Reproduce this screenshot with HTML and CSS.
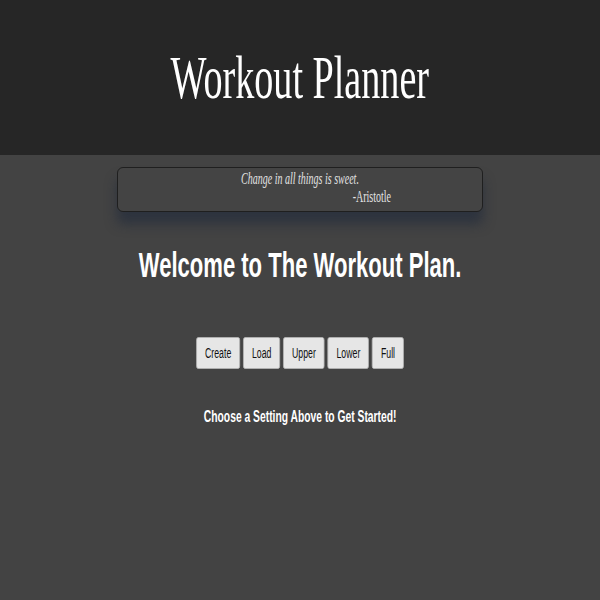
FILE: index.html
```html
<!DOCTYPE html>
<html lang="en">
<head>
<meta charset="utf-8">
<title>Workout Planner</title>
<link rel="stylesheet" href="styles.css">
</head>
<body>
  <header class="header">
    <h1 class="title">Workout Planner</h1>
  </header>
  <main class="main">
    <div class="quote">
      <p class="quote-text">Change in all things is sweet.</p>
      <p class="quote-author">-Aristotle</p>
    </div>
    <h2 class="welcome">Welcome to The Workout Plan.</h2>
    <div class="buttons">
      <button class="btn">Create</button>
      <button class="btn">Load</button>
      <button class="btn">Upper</button>
      <button class="btn">Lower</button>
      <button class="btn">Full</button>
    </div>
    <p class="hint">Choose a Setting Above to Get Started!</p>
  </main>
</body>
</html>
```

FILE: styles.css
```css
html, body {
  margin: 0;
  padding: 0;
  background: #434343;
  min-height: 100%;
}

.narrow {
  transform: scaleX(0.625);
}

.header {
  background: #262626;
  height: 155px;
  padding-top: 47px;
  box-sizing: border-box;
  display: flex;
  flex-direction: column;
  align-items: center;
}

.title {
  margin: 0;
  font-family: "Liberation Serif", serif;
  font-weight: normal;
  font-size: 61px;
  line-height: 61px;
  color: #ffffff;
  white-space: nowrap;
  transform: scaleX(0.625);
  transform-origin: center;
}

.main {
  display: flex;
  flex-direction: column;
  align-items: center;
  padding-top: 12px;
}

.quote {
  width: 366px;
  box-sizing: border-box;
  height: 45px;
  border: 1px solid #1f1f1f;
  border-radius: 6px;
  padding-top: 2px;
  background: #444444;
  box-shadow: 0 12px 12px rgba(28, 38, 58, 0.55);
  font-family: "Liberation Serif", serif;
  font-size: 16px;
  line-height: 18px;
  color: #e2e2e2;
}

.quote-text {
  margin: 0;
  text-align: center;
  font-style: italic;
  white-space: nowrap;
  transform: scaleX(0.625);
  transform-origin: center;
}

.quote-author {
  margin: 0;
  text-align: center;
  padding-left: 230px;
  white-space: nowrap;
  transform: scaleX(0.625);
  transform-origin: center;
}

.welcome {
  margin: 33px 0 0;
  font-family: "Liberation Sans", Arial, sans-serif;
  font-weight: bold;
  font-size: 35px;
  line-height: 40px;
  color: #ffffff;
  white-space: nowrap;
  transform: scaleX(0.63);
  transform-origin: center;
}

.buttons {
  display: flex;
  gap: 5px;
  margin-top: 52px;
  transform: scaleX(0.625);
  transform-origin: center;
}

.btn {
  font-family: "Liberation Sans", Arial, sans-serif;
  font-size: 14px;
  line-height: 16px;
  padding: 7px 13px;
  color: #111111;
  background: #e6e6e6;
  border: 1px solid #b5b5b5;
  border-radius: 3px;
  margin: 0;
}

.hint {
  margin: 37px 0 0;
  font-family: "Liberation Sans", Arial, sans-serif;
  font-weight: bold;
  font-size: 16.5px;
  line-height: 20px;
  color: #ffffff;
  white-space: nowrap;
  transform: scaleX(0.625);
  transform-origin: center;
}
```
